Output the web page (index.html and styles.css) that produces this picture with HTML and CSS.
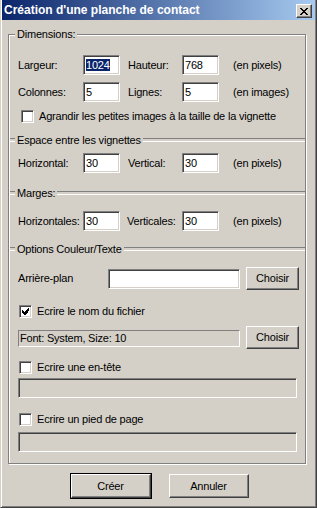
FILE: index.html
```html
<!DOCTYPE html>
<html lang="fr">

<head>
    <meta charset="UTF-8">
    <meta name="viewport" content="width=device-width, initial-scale=1.0">
    <title>Création d'une planche de contact</title>
    <link rel="stylesheet" href="styles.css">
</head>

<body>
    <div class="window">
        <div class="titlebar">
            <span class="title">Création d'une planche de contact</span>
            <span class="close">
                <svg width="8" height="7" viewBox="0 0 8 7" shape-rendering="crispEdges">
                    <path d="M0 0h2v1h-2zM6 0h2v1h-2zM1 1h2v1h-2zM5 1h2v1h-2zM2 2h4v1h-4zM3 3h2v1h-2zM2 4h4v1h-4zM1 5h2v1h-2zM5 5h2v1h-2zM0 6h2v1h-2zM6 6h2v1h-2z" fill="#000"/>
                </svg>
            </span>
        </div>

        <fieldset class="group">
            <legend>Dimensions:</legend>

            <div class="nums r-first">
                <span>Largeur:</span>
                <div class="field"><span class="sel">1024</span></div>
                <span class="lbl2">Hauteur:</span>
                <div class="field">768</div>
                <span class="unit">(en pixels)</span>
            </div>
            <div class="nums r-second">
                <span>Colonnes:</span>
                <div class="field">5</div>
                <span class="lbl2">Lignes:</span>
                <div class="field">5</div>
                <span class="unit">(en images)</span>
            </div>
            <div class="check r-agrandir">
                <span class="cb"></span>
                <span>Agrandir les petites images à la taille de la vignette</span>
            </div>

            <div class="sect r-espace"><span>Espace entre les vignettes</span></div>
            <div class="nums r-espace-row">
                <span>Horizontal:</span>
                <div class="field">30</div>
                <span class="lbl2">Vertical:</span>
                <div class="field">30</div>
                <span class="unit">(en pixels)</span>
            </div>

            <div class="sect r-marges"><span>Marges:</span></div>
            <div class="nums r-marges-row">
                <span>Horizontales:</span>
                <div class="field">30</div>
                <span class="lbl2 tight">Verticales:</span>
                <div class="field">30</div>
                <span class="unit">(en pixels)</span>
            </div>

            <div class="sect r-options"><span>Options Couleur/Texte</span></div>
            <div class="line r-fond">
                <span class="fond-lbl">Arrière-plan</span>
                <div class="field fond"></div>
                <div class="btn">Choisir</div>
            </div>
            <div class="check tight r-nom">
                <span class="cb on">
                    <svg width="7" height="7" viewBox="0 0 7 7" shape-rendering="crispEdges">
                        <path d="M6 0h1v3h-1zM5 1h1v4h-1zM4 2h1v4h-1zM3 3h1v4h-1zM2 4h1v3h-1zM1 3h1v3h-1zM0 2h1v3h-1z" fill="#000"/>
                    </svg>
                </span>
                <span>Ecrire le nom du fichier</span>
            </div>
            <div class="line r-font">
                <div class="static">Font: System, Size: 10</div>
                <div class="btn">Choisir</div>
            </div>
            <div class="check tight r-entete">
                <span class="cb"></span>
                <span>Ecrire une en-tête</span>
            </div>
            <div class="field off r-entete-f"></div>
            <div class="check tight r-pied">
                <span class="cb"></span>
                <span>Ecrire un pied de page</span>
            </div>
            <div class="field off r-pied-f"></div>
        </fieldset>

        <div class="actions">
            <div class="btn big default">Créer</div>
            <div class="btn big">Annuler</div>
        </div>
    </div>
</body>

</html>
```

FILE: styles.css
```css
* {
    box-sizing: border-box;
}

body {
    margin: 0;
    background: #d4d0c8;
    font-family: "Liberation Sans", Arial, sans-serif;
    font-size: 11px;
    letter-spacing: -0.2px;
    line-height: 13px;
    color: #000;
}

.window {
    width: 317px;
    height: 508px;
    background: #d4d0c8;
    border-left: 1px solid #d4d0c8;
    border-right: 1px solid #404040;
    border-bottom: 1px solid #404040;
    box-shadow: inset 1px 0 #fff, inset -1px -1px #808080;
    display: flex;
    flex-direction: column;
}

/* barre de titre */
.titlebar {
    height: 20px;
    margin: 0 1px;
    padding: 0 3px 0 2px;
    display: flex;
    justify-content: space-between;
    align-items: center;
    background: linear-gradient(90deg, #0a246a, #a6caf0);
}

.title {
    color: #fff;
    font-weight: bold;
    font-size: 12px;
    letter-spacing: 0;
}

.close {
    width: 16px;
    height: 14px;
    margin-top: 2px;
    background: #d4d0c8;
    border: 1px solid;
    border-color: #fff #404040 #404040 #fff;
    box-shadow: inset -1px -1px #808080;
    display: flex;
    align-items: center;
    justify-content: center;
}

.close svg {
    display: block;
}

/* cadre principal */
.group {
    width: 298px;
    margin: 8px 0 0 7px;
    padding: 0 9px 11px 9px;
    min-inline-size: 0;
    border: 1px solid #808080;
    box-shadow: inset 1px 1px #fff, 1px 1px #fff;
}

.group legend {
    padding: 0 2px;
    margin-left: -3px;
    line-height: 13px;
    background: #d4d0c8;
}

.sect {
    display: flex;
    align-items: center;
    height: 14px;
    margin-left: -8px;
    margin-right: -9px;
}

.sect::before,
.sect::after {
    content: "";
    height: 2px;
    border-top: 1px solid #808080;
    border-bottom: 1px solid #fff;
}

.sect::before {
    width: 5px;
}

.sect::after {
    flex: 1;
}

.sect span {
    padding: 0 2px 0 2px;
}

/* lignes de saisie */
.nums {
    display: grid;
    grid-template-columns: 65px 37px 62px 37px auto;
    align-items: center;
    height: 20px;
}

.lbl2 {
    padding-left: 8px;
}

.lbl2.tight {
    padding-left: 7px;
}

.unit {
    padding-left: 14px;
}

.field {
    height: 20px;
    padding-left: 2px;
    background: #fff;
    border: 1px solid;
    border-color: #808080 #fff #fff #808080;
    box-shadow: inset 1px 1px #404040, inset -1px -1px #d4d0c8;
    display: flex;
    align-items: center;
}

.field.off {
    background: #d4d0c8;
}

.sel {
    background: #0a246a;
    color: #fff;
    line-height: 12px;
}

.check {
    display: flex;
    align-items: center;
    gap: 5px;
    height: 13px;
    padding-left: 3px;
}

.check.tight {
    padding-left: 1px;
}

.cb {
    width: 13px;
    height: 13px;
    background: #fff;
    border: 1px solid;
    border-color: #808080 #fff #fff #808080;
    box-shadow: inset 1px 1px #404040, inset -1px -1px #d4d0c8;
    display: flex;
    align-items: center;
    justify-content: center;
}

.cb svg {
    display: block;
}

.line {
    display: flex;
    align-items: center;
    height: 23px;
}

.fond-lbl {
    width: 90px;
}

.field.fond {
    width: 132px;
}

.static {
    width: 222px;
    height: 17px;
    align-self: flex-end;
    margin-bottom: 2px;
    padding-left: 1px;
    border: 1px solid;
    border-color: #808080 #fff #fff #808080;
    display: flex;
    align-items: center;
}

.btn {
    width: 53px;
    height: 23px;
    margin-left: auto;
    margin-right: -3px;
    border: 1px solid;
    border-color: #fff #404040 #404040 #fff;
    box-shadow: inset -1px -1px #808080;
    display: flex;
    align-items: center;
    justify-content: center;
}

/* espacements verticaux */
.r-first { margin-top: 14px; }
.r-second { margin-top: 7px; }
.r-agrandir { margin-top: 8px; }
.r-espace { margin-top: 10px; }
.r-espace-row { margin-top: 6px; }
.r-marges { margin-top: 13px; }
.r-marges-row { margin-top: 11px; }
.r-options { margin-top: 11px; }
.r-fond { margin-top: 11px; }
.r-nom { margin-top: 15px; }
.r-font { margin-top: 8px; }
.r-entete { margin-top: 12px; }
.r-entete-f { margin-top: 4px; }
.r-pied { margin-top: 15px; }
.r-pied-f { margin-top: 6px; }

.r-entete-f,
.r-pied-f {
    width: 279px;
}

/* boutons du bas */
.actions {
    display: flex;
    justify-content: center;
    gap: 18px;
    margin-top: 10px;
    padding-left: 2px;
}

.btn.big {
    width: 80px;
    height: 24px;
    margin: 0;
}

.btn.default {
    outline: 1px solid #000;
}
```
